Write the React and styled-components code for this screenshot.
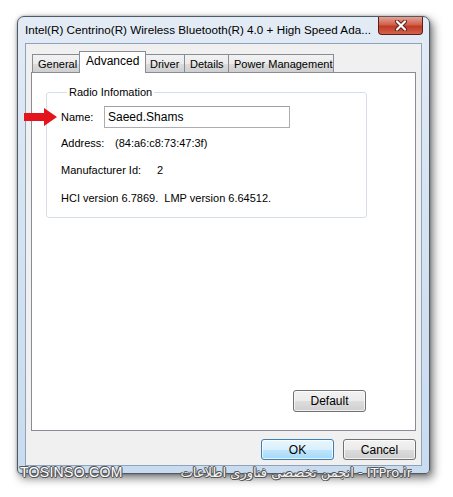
import React from "react";
import styled, { createGlobalStyle } from "styled-components";

const GlobalStyle = createGlobalStyle`
  html, body {
    margin: 0;
    padding: 0;
    background: #ffffff;
  }
  body {
    font-family: "Liberation Sans", Arial, sans-serif;
  }
`;

const Page = styled.div`
  position: relative;
  width: 453px;
  height: 497px;
  padding: 16px 0 0 17px;
  box-sizing: border-box;
  background: #ffffff;
  overflow: hidden;
`;

const Window = styled.div`
  position: relative;
  width: 413px;
  box-sizing: border-box;
  border: 1px solid #4e5a66;
  border-radius: 7px 7px 4px 4px;
  background: linear-gradient(180deg, #e3ebf5 0%, #d6e3f1 40%, #c9dbef 100%);
  box-shadow: 3px 4px 10px rgba(0, 0, 0, 0.55), 0 0 3px rgba(0, 0, 0, 0.3);
  display: flex;
  flex-direction: column;
`;

const TitleBar = styled.div`
  height: 26px;
  display: flex;
  align-items: flex-start;
  padding-left: 7px;
  padding-right: 6px;
`;

const Title = styled.div`
  flex: 1;
  font-size: 11.7px;
  color: #000;
  line-height: 26px;
  white-space: nowrap;
`;

const CloseButton = styled.div`
  width: 45px;
  height: 18px;
  box-sizing: border-box;
  border: 1px solid #5a1e18;
  border-top: none;
  border-radius: 0 0 4px 4px;
  background: linear-gradient(180deg, #e7a293 0%, #d0604c 45%, #c03a26 55%, #d4624a 100%);
  display: flex;
  align-items: center;
  justify-content: center;
`;

const Client = styled.div`
  margin: 0 7px 7px 7px;
  border: 1px solid #8ea3bb;
  background: #f0f0f0;
  padding: 7px 5px 5px 5px;
  display: flex;
  flex-direction: column;
`;

const TabRow = styled.div`
  display: flex;
  align-items: flex-end;
  height: 22px;
  padding-left: 1px;
  position: relative;
  z-index: 1;
  margin-bottom: -1px;
`;

const Tab = styled.div`
  box-sizing: border-box;
  width: ${({ $w }) => $w}px;
  height: ${({ $active }) => ($active ? "22px" : "19px")};
  padding-left: ${({ $active }) => ($active ? "6px" : "5px")};
  margin: 0 ${({ $active }) => ($active ? "-1px" : "0")};
  border: 1px solid #898c95;
  border-bottom: ${({ $active }) => ($active ? "none" : "1px solid #898c95")};
  border-left: ${({ $active, $first }) => ($active || $first ? "1px solid #898c95" : "none")};
  background: ${({ $active }) =>
    $active ? "#ffffff" : "linear-gradient(180deg, #f2f2f2 0%, #ebebeb 50%, #dddddd 51%, #cfcfcf 100%)"};
  font-size: ${({ $active }) => ($active ? "12px" : "11px")};
  line-height: 18px;
  color: #000;
  position: relative;
  z-index: ${({ $active }) => ($active ? 2 : 1)};
  white-space: nowrap;
  overflow: hidden;
`;

const Panel = styled.div`
  height: 359px;
  box-sizing: border-box;
  border: 1px solid #898c95;
  background: #ffffff;
  padding: 13px 48px 18px 14px;
  display: flex;
  flex-direction: column;
`;

const Group = styled.fieldset`
  margin: 0;
  border: 1px solid #d5dfe5;
  border-radius: 3px;
  padding: 7px 14px 12px 14px;
  font-size: 11px;
`;

const Legend = styled.legend`
  margin-left: 6px;
  padding: 0 2px;
  font-size: 11px;
  line-height: 13px;
  color: #000;
`;

const FieldRow = styled.div`
  display: flex;
  align-items: center;
  height: ${({ $tall }) => ($tall ? "22px" : "13px")};
  margin-top: ${({ $gap }) => $gap || 0}px;
  font-size: 11px;
  line-height: 13px;
  color: #000;
  white-space: pre;
`;

const FieldLabel = styled.span`
  width: ${({ $w }) => $w}px;
  flex-shrink: 0;
`;

const TextBox = styled.div`
  width: 186px;
  height: 22px;
  box-sizing: border-box;
  border: 1px solid #abadb3;
  border-top-color: #9ca0aa;
  background: #fff;
  padding-left: 3px;
  font-size: 12px;
  line-height: 20px;
`;

const Spacer = styled.div`
  flex: 1;
`;

const PushButton = styled.div`
  width: 73px;
  height: ${({ $h }) => $h || 21}px;
  box-sizing: border-box;
  border: 1px solid ${({ $focus }) => ($focus ? "#3c7fb1" : "#707070")};
  border-radius: 3px;
  background: ${({ $focus }) =>
    $focus
      ? "linear-gradient(180deg, #eaf6fd 0%, #d9f0fc 50%, #bee6fd 51%, #a7d9f5 100%)"
      : "linear-gradient(180deg, #f2f2f2 0%, #ebebeb 50%, #dddddd 51%, #cfcfcf 100%)"};
  box-shadow: inset 0 0 0 1px rgba(255, 255, 255, 0.7);
  font-size: 12px;
  color: #000;
  display: flex;
  align-items: center;
  justify-content: center;
  align-self: ${({ $align }) => $align || "auto"};
  margin-right: ${({ $mr }) => $mr || 0}px;
`;

const ButtonRow = styled.div`
  display: flex;
  justify-content: flex-end;
  gap: 9px;
  margin-top: 8px;
`;

const Pointer = styled.svg`
  position: absolute;
  left: 6px;
  top: 91px;
  z-index: 5;
`;

const Watermark = styled.div`
  position: absolute;
  top: 464px;
  left: 20px;
  width: 392px;
  display: flex;
  align-items: center;
  color: #ffffff;
  font-family: "Liberation Sans", "DejaVu Sans", sans-serif;
  font-size: 14px;
  line-height: 17px;
  white-space: nowrap;
  text-shadow:
    1px 0 0 #555, -1px 0 0 #555, 0 1px 0 #555, 0 -1px 0 #555,
    1px 1px 0 #777, -1px -1px 0 #777;
`;

const Site = styled.span`
  letter-spacing: 0.3px;
`;

const Forum = styled.span`
  flex: 1;
  text-align: right;
  overflow: hidden;
  font-family: "DejaVu Sans", "Liberation Sans", sans-serif;
  font-size: 13px;
  color: #f4f4f4;
`;

const tabs = [
  { label: "General", w: 48 },
  { label: "Advanced", w: 67 },
  { label: "Driver", w: 40 },
  { label: "Details", w: 44 },
  { label: "Power Management", w: 105 },
];

export default function App() {
  return (
    <>
      <GlobalStyle />
      <Page>
        <Window>
          <TitleBar>
            <Title>Intel(R) Centrino(R) Wireless Bluetooth(R) 4.0 + High Speed Ada...</Title>
            <CloseButton>
              <svg width="14" height="11" viewBox="0 0 14 11">
                <path d="M3 1.5 L11 9.5 M11 1.5 L3 9.5" stroke="#5a1e18" strokeWidth="4" strokeLinecap="round" />
                <path d="M3 1.5 L11 9.5 M11 1.5 L3 9.5" stroke="#ffffff" strokeWidth="2.2" strokeLinecap="round" />
              </svg>
            </CloseButton>
          </TitleBar>

          <Client>
            <TabRow>
              {tabs.map((t, i) => (
                <Tab key={t.label} $w={t.w} $active={t.label === "Advanced"} $first={i === 0}>
                  {t.label}
                </Tab>
              ))}
            </TabRow>
            <Panel>
              <Group>
                <Legend>Radio Infomation</Legend>
                <FieldRow $tall>
                  <FieldLabel $w={43}>Name:</FieldLabel>
                  <TextBox>Saeed.Shams</TextBox>
                </FieldRow>
                <FieldRow $gap={9}>
                  <FieldLabel $w={54}>Address:</FieldLabel>
                  <span>(84:a6:c8:73:47:3f)</span>
                </FieldRow>
                <FieldRow $gap={14}>
                  <FieldLabel $w={96}>Manufacturer Id:</FieldLabel>
                  <span>2</span>
                </FieldRow>
                <FieldRow $gap={15}>HCI version 6.7869.  LMP version 6.64512.</FieldRow>
              </Group>
              <Spacer />
              <PushButton $h={22} $align="flex-end" $mr={1}>
                Default
              </PushButton>
            </Panel>
            <ButtonRow>
              <PushButton $focus>OK</PushButton>
              <PushButton>Cancel</PushButton>
            </ButtonRow>
          </Client>

          <Pointer width="34" height="18" viewBox="0 0 34 18">
            <path d="M0 5 L20 5 L20 0 L33 9 L20 18 L20 13 L0 13 Z" fill="#e3141c" />
          </Pointer>
        </Window>

        <Watermark>
          <Site>TOSINSO.COM</Site>
          <Forum>انجمن تخصصی فناوری اطلاعات - ITPro.ir</Forum>
        </Watermark>
      </Page>
    </>
  );
}
